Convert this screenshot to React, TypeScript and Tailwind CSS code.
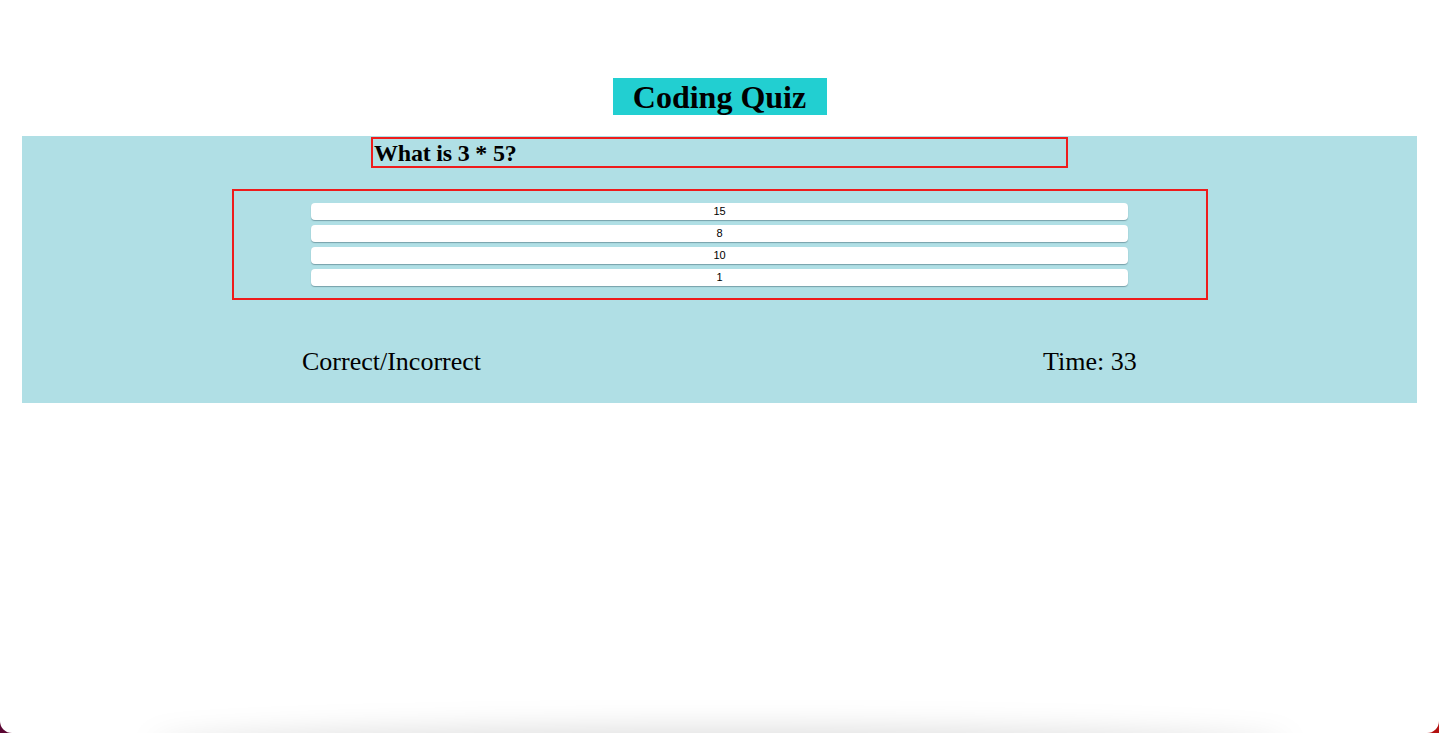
import React from "react";

export default function App() {
  const answers = ["15", "8", "10", "1"];
  return (
    <div className="relative h-[733px] w-[1439px] overflow-hidden bg-[linear-gradient(90deg,#5a0632,#8a0a1a,#b3100f)]">
      <div className="relative h-full w-full overflow-hidden rounded-b-[12px] bg-white" style={{ fontFamily: '"Liberation Serif", "Times New Roman", serif' }}>
        <div className="h-[78px]" />
        <div className="flex justify-center">
          <h1 className="flex h-[37px] w-[214px] items-center justify-center bg-[#22cfd1] text-[32px] font-bold leading-none text-black">
            Coding Quiz
          </h1>
        </div>
        <div className="mx-[22px] mt-[21px] h-[267px] bg-[#b0dfe5] pt-px">
          <div className="flex justify-center">
            <h2 className="flex h-[31px] w-[697px] items-center border-2 border-[#ee1c1c] px-px text-[24px] font-bold leading-none tracking-[-0.2px] text-black">
              What is 3 * 5?
            </h2>
          </div>
          <div className="mt-[21px] flex justify-center">
            <div className="flex h-[111px] w-[976px] flex-col items-center gap-[5px] border-2 border-[#ee1c1c] pt-[12px]">
              {answers.map((a) => (
                <button
                  key={a}
                  className="h-[17px] w-[817px] rounded-[4px] bg-white text-[11px] leading-none text-black shadow-[0_1px_1px_rgba(80,120,130,0.6)]"
                  style={{ fontFamily: '"Liberation Sans", Arial, sans-serif' }}
                >
                  {a}
                </button>
              ))}
            </div>
          </div>
          <div className="mt-[49px] flex text-[26px] leading-none text-black">
            <span className="ml-[280px]">Correct/Incorrect</span>
            <span className="ml-[562px]">Time: 33</span>
          </div>
        </div>
        <div className="absolute bottom-[-30px] left-[150px] h-[36px] w-[1140px] rounded-[50%] bg-[rgba(0,0,0,0.12)] blur-[14px]" />
      </div>
    </div>
  );
}
